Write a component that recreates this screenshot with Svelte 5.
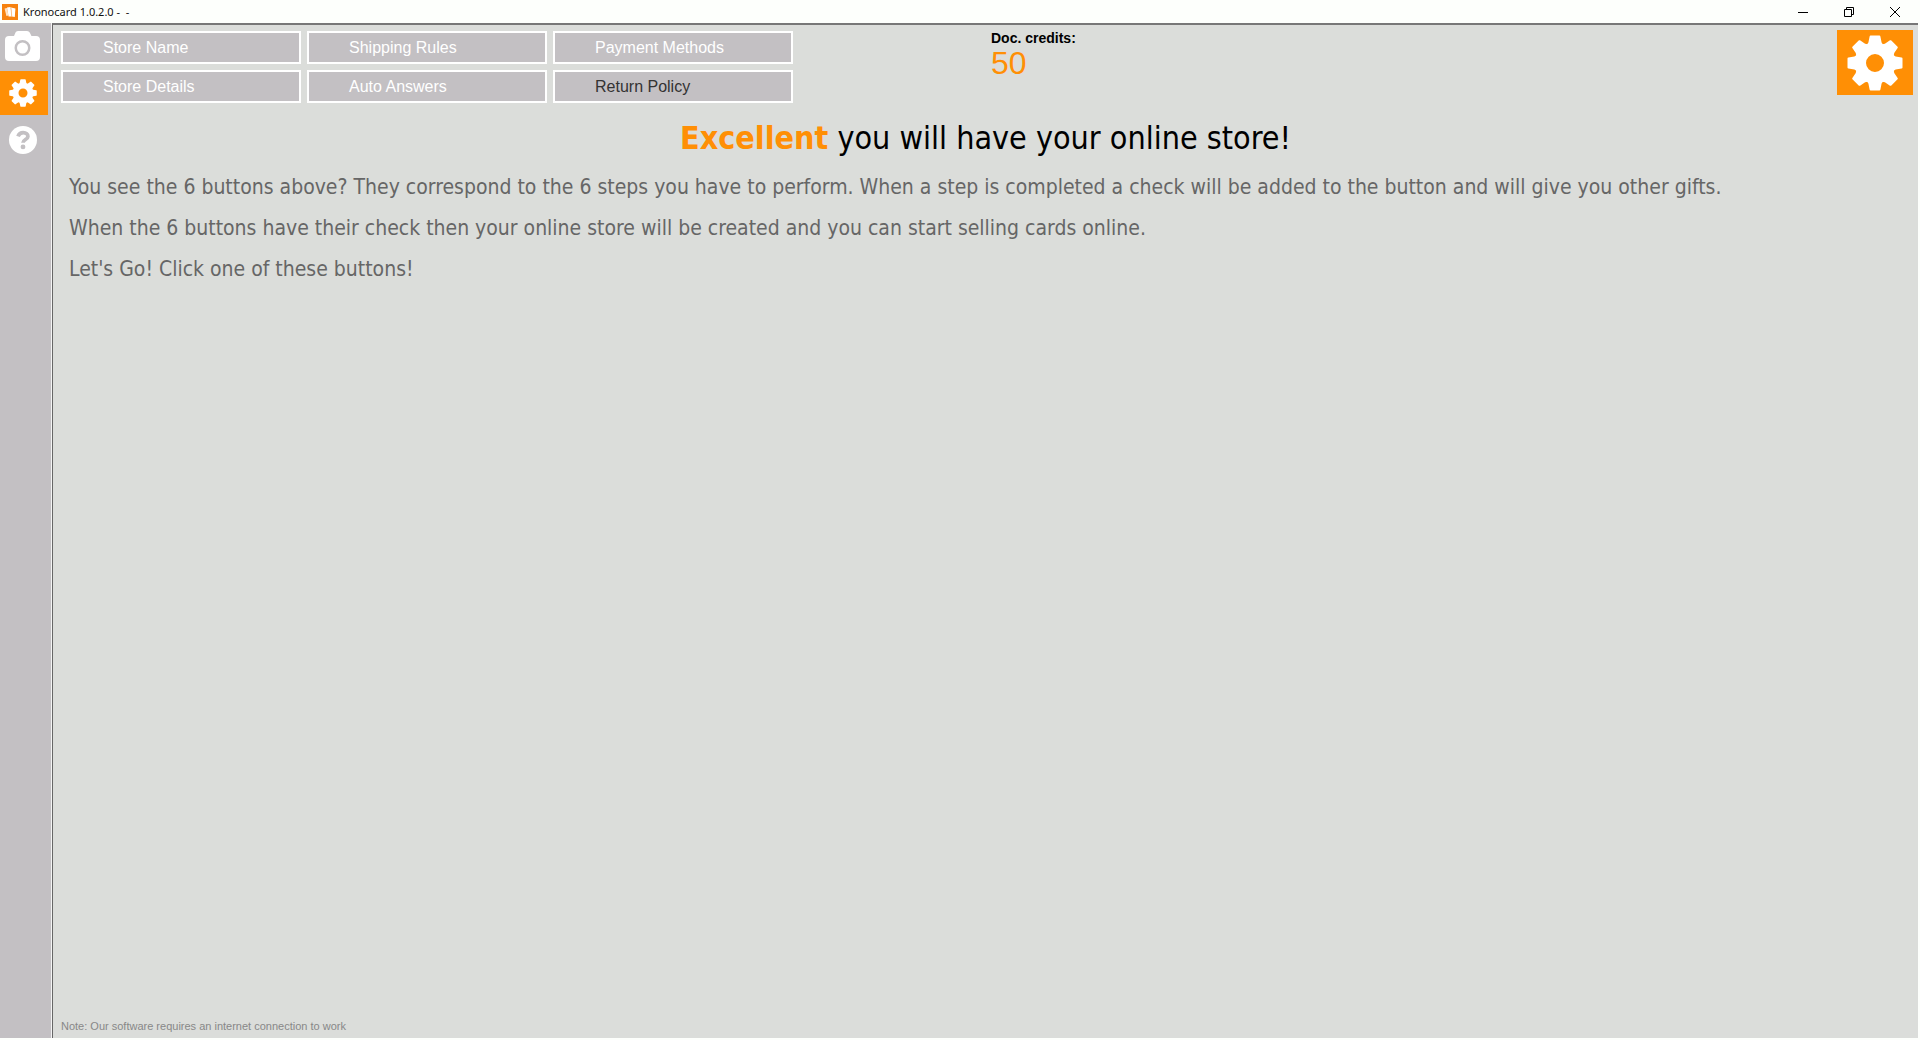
<script lang="ts">
  let active = "settings";
  let credits = 50;

  const columns = 3;
  const steps = [
    { label: "Store Name", ready: false },
    { label: "Shipping Rules", ready: false },
    { label: "Payment Methods", ready: false },
    { label: "Store Details", ready: false },
    { label: "Auto Answers", ready: false },
    { label: "Return Policy", ready: true },
  ];
  const teeth = [0, 45, 90, 135, 180, 225, 270, 315];
</script>

{#snippet gear()}
  <svg viewBox="-28 -28 56 56" aria-hidden="true">
    <circle r="14.5" fill="none" stroke="#fff" stroke-width="11" />
    {#each teeth as angle}
      <path
        d="M-4.4 -27.5H4.4Q5.2 -27.5 5.4 -26.6L6.6 -20.6L8 -18.4L5 -14H-5L-8 -18.4L-6.6 -20.6L-5.4 -26.6Q-5.2 -27.5 -4.4 -27.5Z"
        fill="#fff"
        transform="rotate({angle})"
      />
    {/each}
  </svg>
{/snippet}

<div class="window">
  <header class="titlebar">
    <svg class="logo" width="16" height="16" viewBox="0 0 16 16" aria-hidden="true">
      <rect width="16" height="16" fill="#f7820f" />
      <path d="M2.6 4.6L5 4L6.4 11.6L4.4 12Z" fill="#ffe3c4" />
      <path d="M5 3.6L8.6 3L9.6 12.4L6.6 12.6Z" fill="#fff" />
      <path d="M9 3.6L13.4 4.4L12.8 13L9.8 12.6Z" fill="#fff" />
      <path d="M8.9 3.4L9.8 12.8" stroke="#fbb878" stroke-width=".6" />
    </svg>
    <span class="title">Kronocard 1.0.2.0 -&nbsp; -</span>
    <div class="controls">
      <button aria-label="Minimize">
        <svg width="12" height="12" viewBox="0 0 12 12"><path d="M1 6.5H11" /></svg>
      </button>
      <button aria-label="Restore">
        <svg width="12" height="12" viewBox="0 0 12 12"><path d="M1.5 3.5H8.5V10.5H1.5ZM3.5 3.5V1.5H10.5V8.5H8.5" /></svg>
      </button>
      <button aria-label="Close">
        <svg width="12" height="12" viewBox="0 0 12 12"><path d="M1 1L11 11M11 1L1 11" /></svg>
      </button>
    </div>
  </header>

  <div class="body">
    <nav class="sidebar">
      <button class:active={active === "camera"} aria-label="Camera" on:click={() => (active = "camera")}>
        <svg width="36" height="30" viewBox="0 0 36 30">
          <path
            fill="#fff"
            fill-rule="evenodd"
            d="M4 5H9L10.5 1.5Q11 0 13 0H22Q24 0 24.7 1.5L26.5 5H31Q35 5 35 9V26Q35 30 31 30H4Q0 30 0 26V9Q0 5 4 5ZM17.5 9A8 8 0 1 0 17.5 25A8 8 0 1 0 17.5 9ZM17.5 11.5A5.5 5.5 0 1 1 17.5 22.5A5.5 5.5 0 1 1 17.5 11.5Z"
          />
        </svg>
      </button>
      <button class:active={active === "settings"} aria-label="Settings" on:click={() => (active = "settings")}>
        {@render gear()}
      </button>
      <button class:active={active === "help"} aria-label="Help" on:click={() => (active = "help")}>
        <svg viewBox="0 0 28 28">
          <circle cx="14" cy="14" r="14" fill="#fff" />
          <path d="M9 10.4C10 7.6 11.8 6.6 14.2 6.6C17 6.6 18.9 8.2 18.9 10.4C18.9 13.6 14 13.4 14 16.8" fill="none" stroke="#c3c0c3" stroke-width="3.8" />
          <circle cx="14" cy="20.9" r="2.4" fill="#c3c0c3" />
        </svg>
      </button>
    </nav>

    <main>
      <div class="top">
        <div class="steps" style="--columns: {columns}">
          {#each steps as step}
            <button class:ready={step.ready}>{step.label}</button>
          {/each}
        </div>
        <div class="credits">
          <strong>Doc. credits:</strong>
          <span>{credits}</span>
        </div>
        <button class="big-gear" aria-label="Store settings">{@render gear()}</button>
      </div>

      <h1><b>Excellent</b> you will have your online store!</h1>
      <div class="intro">
        <p>You see the 6 buttons above? They correspond to the 6 steps you have to perform. When a step is completed a check will be added to the button and will give you other gifts.</p>
        <p>When the 6 buttons have their check then your online store will be created and you can start selling cards online.</p>
        <p>Let's Go! Click one of these buttons!</p>
      </div>

      <footer>Note: Our software requires an internet connection to work</footer>
    </main>
  </div>
</div>

<style>
  :global(body) {
    margin: 0;
  }

  .window {
    box-sizing: border-box;
    display: flex;
    flex-direction: column;
    min-height: 100vh;
    padding: 0 2px 2px 0;
    background: #fdfffc;
    font-family: "Liberation Sans", Arial, sans-serif;
  }

  button {
    padding: 0;
    border: none;
    background: transparent;
    font-family: inherit;
    cursor: pointer;
  }

  svg {
    display: block;
  }

  .titlebar {
    display: flex;
    align-items: center;
    height: 23px;
    padding-left: 2px;
  }

  .title {
    margin-left: 5px;
    color: #111;
    font-family: "Segoe UI", "Noto Sans", sans-serif;
    font-size: 11px;
    line-height: 20px;
  }

  .controls {
    display: flex;
    margin-left: auto;
  }

  .controls button {
    display: flex;
    align-items: center;
    justify-content: center;
    width: 46px;
    height: 20px;
  }

  .controls path {
    fill: none;
    stroke: #000;
    stroke-width: 1;
  }

  .body {
    display: flex;
    flex: 1;
    background: #c3c0c3;
  }

  .sidebar {
    display: flex;
    flex-direction: column;
    gap: 3px;
    width: 51px;
    flex-shrink: 0;
    padding-top: 1px;
    border-right: 1px solid #f4f4f4;
  }

  .sidebar button {
    display: flex;
    align-items: center;
    justify-content: center;
    box-sizing: border-box;
    width: 48px;
    height: 44px;
    padding-right: 3px;
  }

  .sidebar button.active {
    background: #ff8f05;
  }

  .sidebar button:not(:first-child) svg {
    width: 28px;
    height: 28px;
  }

  main {
    display: flex;
    flex-direction: column;
    flex: 1;
    min-width: 0;
    border-top: 2px solid #777;
    border-left: 1px solid #666;
    background: #dbddda;
  }

  .top {
    display: flex;
    align-items: flex-start;
    padding: 5px 5px 0 8px;
  }

  .steps {
    display: grid;
    grid-template-columns: repeat(var(--columns), 240px);
    gap: 6px;
    padding-top: 1px;
  }

  .steps button {
    height: 33px;
    padding-left: 40px;
    border: 2px solid #fff;
    background: #c3c0c3;
    color: #fff;
    font-size: 16px;
    text-align: left;
  }

  .steps button.ready {
    color: #333;
  }

  .credits {
    display: flex;
    flex-direction: column;
    margin-left: 198px;
  }

  .credits strong {
    font-size: 14px;
    line-height: 16px;
  }

  .credits span {
    color: #ff8f05;
    font-size: 32px;
    line-height: 34px;
  }

  .big-gear {
    display: flex;
    align-items: center;
    justify-content: center;
    width: 76px;
    height: 65px;
    margin-left: auto;
    background: #ff8f05;
  }

  .big-gear svg {
    width: 56px;
    height: 56px;
  }

  h1,
  .intro {
    font-family: Tahoma, "DejaVu Sans Condensed", "Noto Sans", sans-serif;
  }

  h1 {
    margin: 15px 0 0;
    color: #000;
    font-size: 32px;
    font-weight: 400;
    line-height: 40px;
    text-align: center;
  }

  h1 b {
    color: #ff8f05;
  }

  .intro {
    padding: 9px 16px 0;
  }

  .intro p {
    margin: 0;
    color: #666;
    font-size: 21px;
    line-height: 41px;
  }

  footer {
    margin-top: auto;
    padding: 0 8px 4px;
    color: #888;
    font-size: 11px;
    line-height: 16px;
  }
</style>
